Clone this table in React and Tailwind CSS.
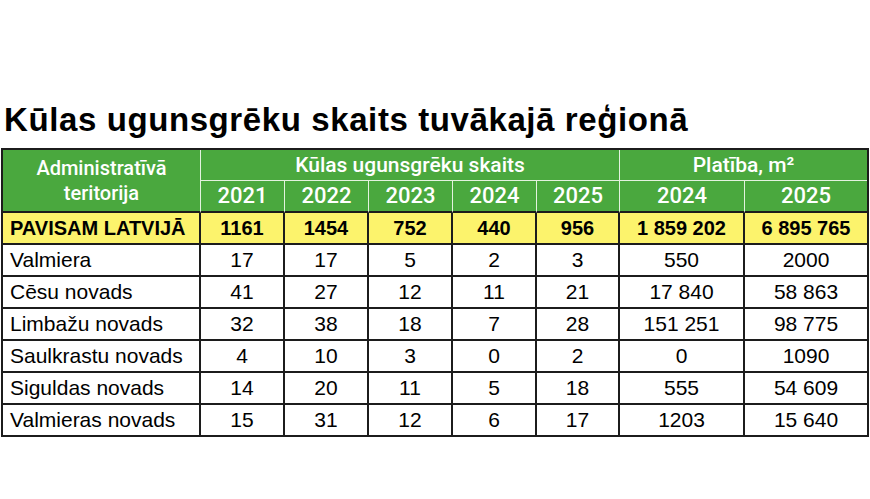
import React from "react";

const rows = [
  ["Valmiera", "17", "17", "5", "2", "3", "550", "2000"],
  ["Cēsu novads", "41", "27", "12", "11", "21", "17 840", "58 863"],
  ["Limbažu novads", "32", "38", "18", "7", "28", "151 251", "98 775"],
  ["Saulkrastu novads", "4", "10", "3", "0", "2", "0", "1090"],
  ["Siguldas novads", "14", "20", "11", "5", "18", "555", "54 609"],
  ["Valmieras novads", "15", "31", "12", "6", "17", "1203", "15 640"],
];

const total = ["PAVISAM LATVIJĀ", "1161", "1454", "752", "440", "956", "1 859 202", "6 895 765"];

export default function App() {
  return (
    <div className="w-[870px] h-[499px] bg-white overflow-hidden" style={{ fontFamily: '"Liberation Sans", Arial, sans-serif' }}>
      <h1 className="mt-[103px] pl-[4px] text-[33px] leading-[33px] tracking-[0.6px] font-bold text-black">
        Kūlas ugunsgrēku skaits tuvākajā reģionā
      </h1>
      <table className="mt-[12px] ml-[1px] w-[868px] table-fixed border-separate border-spacing-0 border-2 border-[#1c1c1c]">
        <colgroup>
          <col className="w-[198px]" />
          <col className="w-[84px]" />
          <col className="w-[84px]" />
          <col className="w-[84px]" />
          <col className="w-[84px]" />
          <col className="w-[83px]" />
          <col className="w-[125px]" />
          <col />
        </colgroup>
        <thead className="bg-[#4aa83e] text-white" style={{ fontFamily: 'Roboto, "Liberation Sans", sans-serif' }}>
          <tr className="h-[31px]">
            <th rowSpan={2} className="border-r-[1.5px] border-b-2 border-r-[#e4f2df] border-b-[#1c1c1c] text-[20px] leading-[25px] font-medium pt-[1px]">
              Administratīvā<br />teritorija
            </th>
            <th colSpan={5} className="border-r-[1.5px] border-b-[1.5px] border-[#e4f2df] text-[21px] leading-[24px] font-medium">
              Kūlas ugunsgrēku skaits
            </th>
            <th colSpan={2} className="border-b-[1.5px] border-[#e4f2df] text-[21px] leading-[24px] font-medium">
              Platība, m²
            </th>
          </tr>
          <tr className="h-[32px]">
            {["2021", "2022", "2023", "2024", "2025", "2024", "2025"].map((y, i) => (
              <th
                key={i}
                className={
                  "border-b-2 border-b-[#1c1c1c] text-[22px] leading-[24px] font-medium " +
                  (i < 6 ? "border-r-[1.5px] border-r-[#e4f2df]" : "")
                }
              >
                {y}
              </th>
            ))}
          </tr>
        </thead>
        <tbody className="text-black">
          <tr className="h-[32px] bg-[#fcf36c]">
            {total.map((v, i) => (
              <td
                key={i}
                className={
                  "border-b-2 border-[#1c1c1c] text-[20px] leading-[24px] font-bold " +
                  (i === 0 ? "text-left pl-[7px] " : "text-center ") +
                  (i < 7 ? "border-r-2" : "")
                }
              >
                {v}
              </td>
            ))}
          </tr>
          {rows.map((r, ri) => (
            <tr key={ri} className={ri === rows.length - 1 ? "h-[30px]" : "h-[32px]"}>
              {r.map((v, i) => (
                <td
                  key={i}
                  className={
                    "border-[#1c1c1c] text-[21px] leading-[24px] " +
                    (ri < rows.length - 1 ? "border-b-2 " : "") +
                    (i === 0 ? "text-left pl-[7px] " : "text-center ") +
                    (i < 7 ? "border-r-2" : "")
                  }
                >
                  {v}
                </td>
              ))}
            </tr>
          ))}
        </tbody>
      </table>
    </div>
  );
}
